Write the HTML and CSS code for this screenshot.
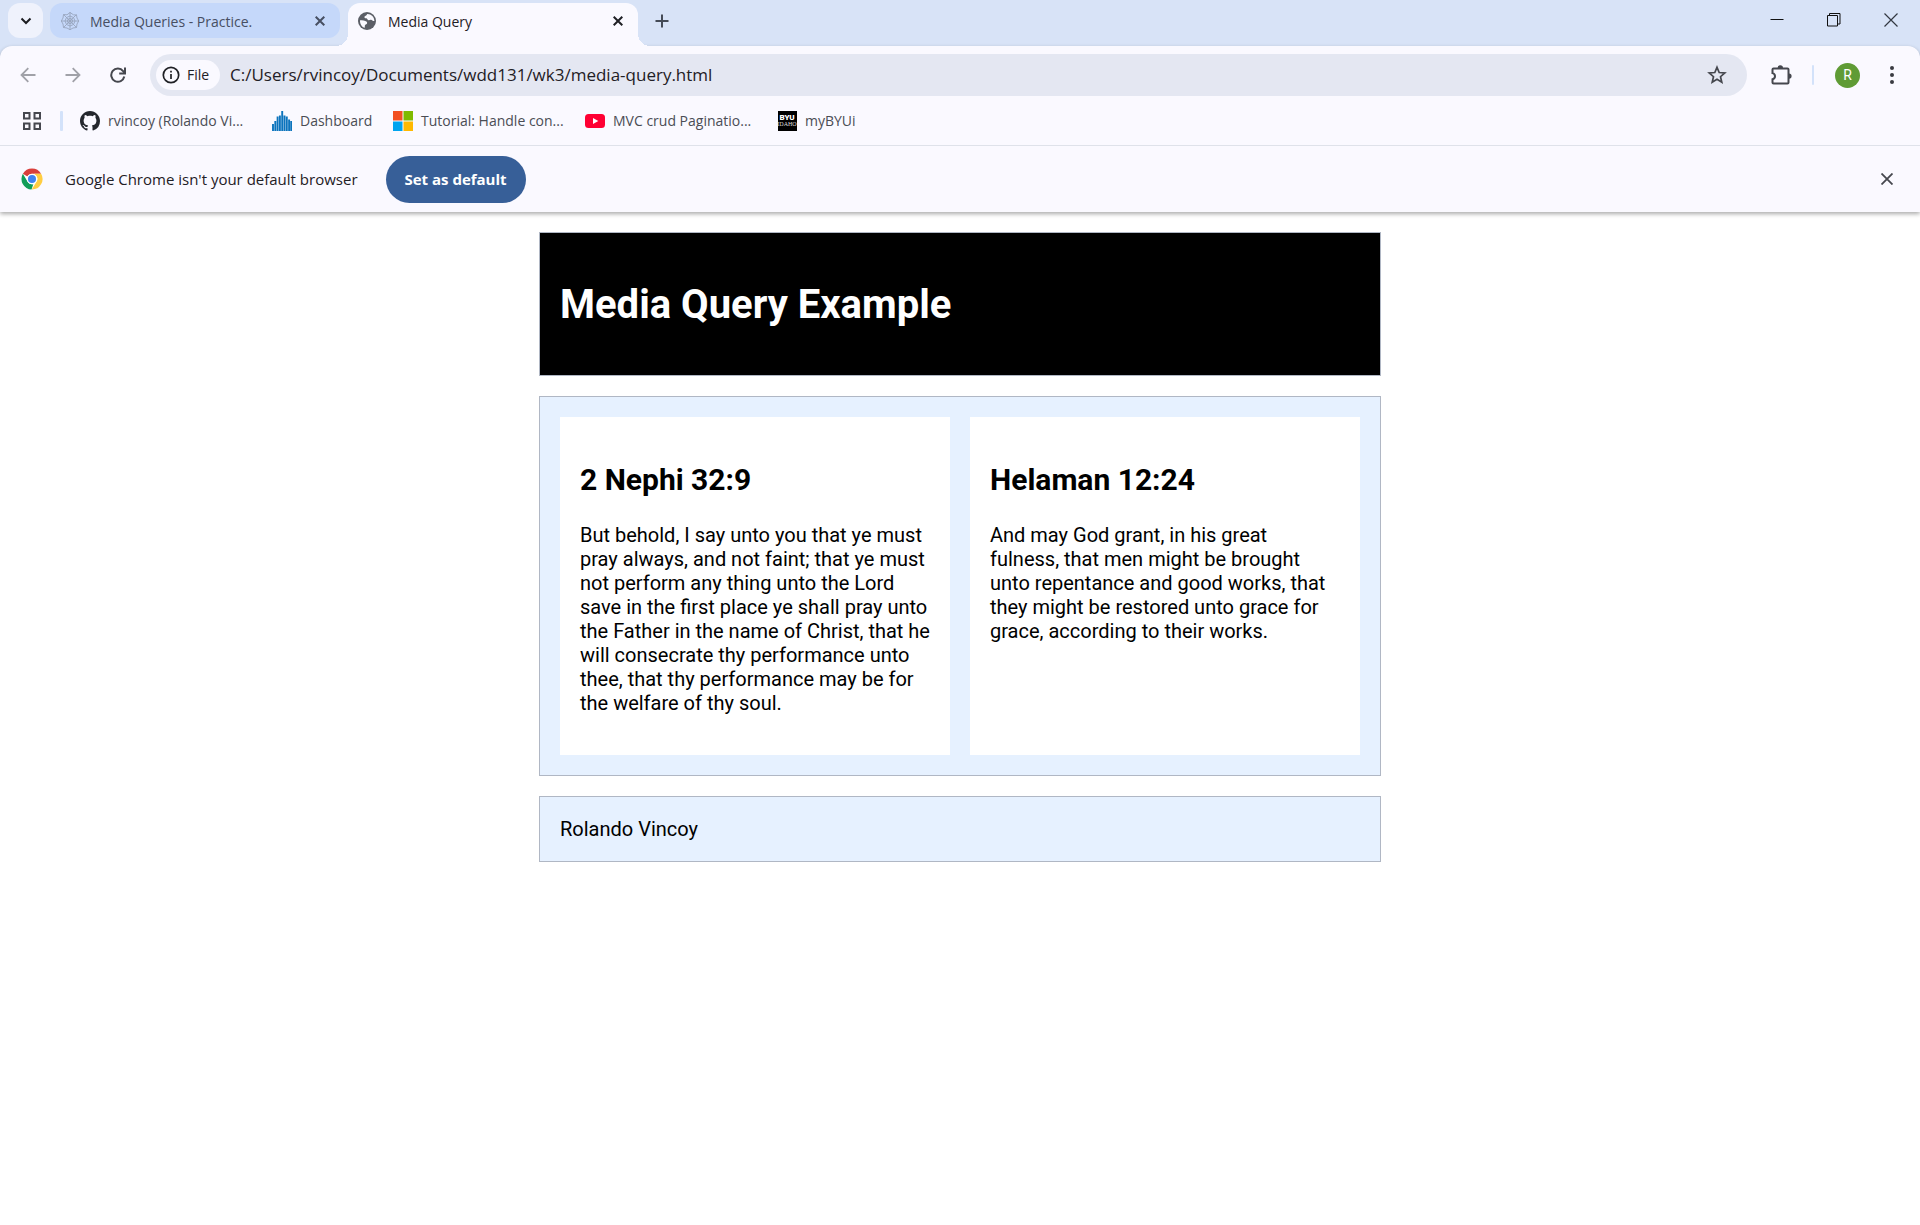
FILE: index.html
```html
<!DOCTYPE html>
<html lang="en">
<head>
<meta charset="utf-8">
<title>Media Query</title>
<link rel="stylesheet" href="styles.css">
</head>
<body>
<div class="browser">
  <div class="tab-strip">
    <button class="tab-search" aria-label="Search tabs"><svg width="12" height="12" viewBox="0 0 12 12" fill="none" stroke="#1c1d21" stroke-width="2"><path d="M1.500 3.500 6 8l4.500-4.500"/></svg></button>
    <div class="tab tab-idle">
      <svg class="tab-icon" width="20" height="20" viewBox="0 0 20 20" fill="none" stroke="#97a5bd"><path d="M10 1v18M1 10h18M3.500 3.500l13 13M16.500 3.500l-13 13" stroke-width=".9"/><path d="M10 1.500l3.500 2.300 3 .200.500 3L18.700 10l-1.700 3-.5 3.500-3.500.5-3 1.700-3-1.700-3.500-.5-.5-3.500L1.300 10 3 7l.5-3.500 3.500.3zM10 5l3.500 1.500L15 10l-1.500 3.500L10 15l-3.500-1.500L5 10l1.500-3.500z" stroke-width=".9"/><circle cx="10" cy="10" r="2.500"/></svg>
      <span class="tab-title">Media Queries - Practice.</span>
      <button class="tab-close" aria-label="Close tab"><svg width="10" height="10" viewBox="0 0 10 10" stroke="currentColor" stroke-width="2"><path d="M.7.7l8.600 8.600M9.300.7.7 9.300"/></svg></button>
    </div>
    <div class="tab tab-active">
      <svg class="tab-icon" width="18" height="18" viewBox="0 0 18 18"><circle cx="9" cy="9" r="9" fill="#5b5e66"/><path d="M9.500 1.900c-.8.400-.6 1.100-1.500 1.500-1 .5-1.700 1-1.500 2 .2.700 1.200.7 1.800.9 1 .3 1.100 1.500 2.200 1.900 1 .3 1.500-.7 2.500-.5 1 .2 1.500 1.300 3.400 1.300C16.400 5 13.300 1.900 9.500 1.900zM2 8.200c2 .1 5.400.1 6.700 1.500.9 1 .3 2.200-.5 2.600-.8.400-1.400.8-1.400 1.800v1.700C4 15 1.800 12.200 2 8.200z" fill="#faf9ff"/></svg>
      <span class="tab-title">Media Query</span>
      <button class="tab-close" aria-label="Close tab"><svg width="10" height="10" viewBox="0 0 10 10" stroke="currentColor" stroke-width="2"><path d="M.7.7l8.600 8.600M9.300.7.7 9.300"/></svg></button>
    </div>
    <button class="new-tab" aria-label="New tab"><svg width="14" height="14" viewBox="0 0 14 14" stroke="#454b57" stroke-width="2"><path d="M7 .5v13M.5 7h13"/></svg></button>
    <div class="window-controls">
      <button aria-label="Minimize"><svg width="14" height="14" viewBox="0 0 14 14" stroke="#111"><path d="M.5 6.500h13"/></svg></button>
      <button aria-label="Restore"><svg width="14" height="14" viewBox="0 0 14 14" fill="none" stroke="#111"><path d="M.5 2.500h10v10.500h-10zM2.500 2.500v-2h10.500v10.500h-2.500"/></svg></button>
      <button aria-label="Close"><svg width="14" height="14" viewBox="0 0 14 14" stroke="#333842" stroke-width="1.200"><path d="M.5.5l13 13M13.500.5l-13 13"/></svg></button>
    </div>
  </div>

  <div class="chrome-panel">
    <div class="toolbar">
      <nav class="nav-buttons" aria-label="History">
        <button aria-label="Back"><svg width="16" height="16" viewBox="0 0 16 16" fill="none" stroke="#a0a1a8" stroke-width="1.800"><path d="M15.500 8H1.800M8.300 1.200 1.500 8l6.800 6.800"/></svg></button>
        <button aria-label="Forward"><svg width="16" height="16" viewBox="0 0 16 16" fill="none" stroke="#a0a1a8" stroke-width="1.800"><path d="M.5 8h13.700M7.700 1.200 14.500 8l-6.800 6.800"/></svg></button>
        <button aria-label="Reload"><svg width="16" height="16" viewBox="0 0 16 16" fill="none" stroke="#45474e" stroke-width="2"><path d="M14.300 9.500a6.600 6.600 0 1 1-1.200-5.400L14.500 6"/><path d="M15 .5v6H9.200"/></svg></button>
      </nav>
      <div class="omnibox">
        <button class="file-chip"><svg width="18" height="18" viewBox="0 0 18 18" fill="none" stroke="#1f2025" stroke-width="1.700"><circle cx="9" cy="9" r="7.700"/><path d="M9 8v5M9 4.700v1.800"/></svg>File</button>
        <input class="address" type="text" aria-label="Address" value="C:/Users/rvincoy/Documents/wdd131/wk3/media-query.html">
        <button class="star" aria-label="Bookmark this tab"><svg width="20" height="20" viewBox="0 0 20 20" fill="none" stroke="#45474e" stroke-width="1.700"><path d="M10 2.300l2.200 5.200 5.600.5-4.300 3.700 1.300 5.500-4.800-2.900-4.800 2.900 1.300-5.500L2.200 8l5.600-.5z"/></svg></button>
      </div>
      <div class="actions">
        <button class="extensions" aria-label="Extensions"><svg width="22" height="22" viewBox="0 0 22 22"><path d="M3.500 4.500h14q1 0 1 1v13q0 1-1 1h-14q-1 0-1-1v-3.300c1.700-.4 2.500-1.600 2.500-3s-.8-2.700-2.500-3.100V5.500q0-1 1-1z" fill="none" stroke="#45474e" stroke-width="2"/><path d="M7.600 4a2.700 2.700 0 0 1 5.400 0zM19 9.500a2.600 2.600 0 0 1 0 5.200z" fill="#45474e"/></svg></button>
        <span class="divider"></span>
        <button class="avatar" aria-label="Profile">R</button>
        <button class="menu" aria-label="Menu"><svg width="4" height="18" viewBox="0 0 4 18" fill="#393b42"><circle cx="2" cy="2" r="2"/><circle cx="2" cy="9" r="2"/><circle cx="2" cy="16" r="2"/></svg></button>
      </div>
    </div>

    <nav class="bookmarks" aria-label="Bookmarks">
      <button class="apps" aria-label="Apps"><svg width="18" height="18" viewBox="0 0 18 18" fill="none" stroke="#45474e" stroke-width="2"><path d="M1 1h5.500v5.500H1zM11.500 1H17v5.500h-5.500zM1 11.500h5.500V17H1zM11.500 11.500H17V17h-5.500z"/></svg></button>
      <span class="divider"></span>
      <a class="bookmark" href="#"><svg width="20" height="20" viewBox="0 0 16 16" fill="#24272d"><path d="M8 0C3.580 0 0 3.580 0 8c0 3.540 2.290 6.530 5.470 7.590.4.070.55-.17.55-.38 0-.19-.01-.82-.01-1.490-2.010.37-2.530-.49-2.690-.94-.09-.23-.48-.94-.82-1.130-.28-.15-.68-.52-.01-.53.63-.01 1.080.58 1.230.82.72 1.210 1.870.87 2.330.66.070-.52.28-.87.51-1.070-1.780-.2-3.640-.89-3.640-3.950 0-.87.31-1.590.82-2.150-.08-.2-.36-1.020.08-2.120 0 0 .67-.21 2.200.82.640-.18 1.320-.27 2-.27s1.360.09 2 .27c1.530-1.040 2.200-.82 2.200-.82.440 1.100.16 1.920.08 2.120.51.560.82 1.270.82 2.150 0 3.070-1.870 3.750-3.650 3.950.29.25.54.73.54 1.480 0 1.070-.01 1.930-.01 2.200 0 .21.15.46.55.38A8.010 8.010 0 0 0 16 8c0-4.420-3.580-8-8-8z"/></svg>rvincoy (Rolando Vi...</a>
      <a class="bookmark bookmark-short" href="#"><svg width="20" height="20" viewBox="0 0 20 20" stroke="#0c74bd" stroke-width="1.900"><path d="M1 20v-7M3.300 20V10M5.600 20V5.500M7.900 20V4.500M10.200 20V0M12.500 20V4.500M14.800 20V5.500M17.100 20V8.500M19.200 20V10"/></svg>Dashboard</a>
      <a class="bookmark" href="#"><svg width="20" height="20" viewBox="0 0 20 20"><path fill="#f25022" d="M0 0h9.500v9.500H0z"/><path fill="#7fba00" d="M10.500 0H20v9.500h-9.500z"/><path fill="#00a4ef" d="M0 10.500h9.500V20H0z"/><path fill="#ffb900" d="M10.500 10.500H20V20h-9.500z"/></svg>Tutorial: Handle con...</a>
      <a class="bookmark" href="#"><svg width="20" height="20" viewBox="0 0 20 20"><rect y="3" width="20" height="14" rx="3.500" fill="#f03"/><path d="M8 7l5.300 3L8 13z" fill="#fff"/></svg>MVC crud Paginatio...</a>
      <a class="bookmark" href="#"><svg width="20" height="20" viewBox="0 0 20 20"><path d="M1 0h19v20H1z"/><text class="byu-bold" x="10" y="9" text-anchor="middle">BYU</text><text class="byu-thin" x="10" y="15" text-anchor="middle">IDAHO</text></svg>myBYUi</a>
    </nav>

    <div class="infobar">
      <svg width="22" height="22" viewBox="0 0 48 48"><circle cx="24" cy="24" r="23" fill="#fff"/><path fill="#d93f3c" d="M24 1a23 23 0 0 1 19.900 11.500H24a11.500 11.500 0 0 0-10 5.800L4.100 12.500A23 23 0 0 1 24 1z"/><path fill="#119d58" d="M4.100 12.500l10 17.200A11.500 11.500 0 0 0 24 35.500l2.800-.3L23 47A23 23 0 0 1 4.100 12.500z"/><path fill="#ffcd42" d="M43.900 12.500A23 23 0 0 1 23.500 47L34 29.700a11.500 11.500 0 0 0-3-14.900l-3-2.300z"/><circle cx="24" cy="24" r="11.500" fill="#fff"/><circle cx="24" cy="24" r="8.800" fill="#3f83f1"/></svg>
      <span class="info-text">Google Chrome isn't your default browser</span>
      <button class="set-default">Set as default</button>
      <button class="info-close" aria-label="Dismiss"><svg width="12" height="12" viewBox="0 0 12 12" stroke="#45474e" stroke-width="1.800"><path d="M.5.5l11 11M11.500.5l-11 11"/></svg></button>
    </div>
  </div>
</div>

<div class="page">
  <header class="box site-header"><h1>Media Query Example</h1></header>
  <main class="box verses">
    <section class="card">
      <h2>2 Nephi 32:9</h2>
      <p>But behold, I say unto you that ye must pray always, and not faint; that ye must not perform any thing unto the Lord save in the first place ye shall pray unto the Father in the name of Christ, that he will consecrate thy performance unto thee, that thy performance may be for the welfare of thy soul.</p>
    </section>
    <section class="card">
      <h2>Helaman 12:24</h2>
      <p>And may God grant, in his great fulness, that men might be brought unto repentance and good works, that they might be restored unto grace for grace, according to their works.</p>
    </section>
  </main>
  <footer class="box">Rolando Vincoy</footer>
</div>
</body>
</html>
```
FILE: styles.css
```css
* { box-sizing: border-box; }

body {
  margin: 0;
  background: #fff;
  color: #000;
  font: 20px/24px Roboto, sans-serif;
}

svg { display: block; flex: none; }

button {
  display: flex;
  align-items: center;
  justify-content: center;
  flex: none;
  padding: 0;
  border: 0;
  background: none;
  color: inherit;
  font: inherit;
}

/* Browser window */
.browser {
  background: #d8e3f7;
  color: #1f2025;
  font: 15px/20px "Open Sans", "Noto Sans", sans-serif;
}

.tab-strip {
  display: flex;
  align-items: flex-start;
  height: 46px;
  padding: 3px 0 0 8px;
}

.tab-search {
  width: 35px;
  height: 35px;
  border-radius: 12px;
  background: #eff2fc;
}

.tab {
  display: flex;
  align-items: center;
  width: 290px;
  height: 35px;
  padding: 0 10px;
}

.tab-idle {
  margin: 0 8px 0 7px;
  border-radius: 12px;
  background: #c5d8fa;
  color: #474f62;
  gap: 10px;
}

.tab-active {
  position: relative;
  height: 43px;
  padding-bottom: 8px;
  border-radius: 12px 12px 0 0;
  background: #faf9ff;
  gap: 12px;
}

/* Flared feet of the selected tab */
.tab-active::before,
.tab-active::after {
  content: "";
  position: absolute;
  bottom: 0;
  width: 12px;
  height: 12px;
}
.tab-active::before {
  right: 100%;
  background: radial-gradient(circle at 0 0, transparent 12px, #faf9ff 12px);
}
.tab-active::after {
  left: 100%;
  background: radial-gradient(circle at 100% 0, transparent 12px, #faf9ff 12px);
}

.tab-title { flex: 1; padding-top: 2px; font-size: 14px; }

.tab-close { width: 20px; height: 20px; }

.new-tab { width: 36px; height: 36px; margin-left: 6px; }

.window-controls { display: flex; margin: 0 1px 0 auto; }
.window-controls button { width: 57px; height: 34px; }

.chrome-panel {
  border-radius: 12px 12px 0 0;
  background: #faf9ff;
  box-shadow: 0 2px 4px #0005;
}

.toolbar {
  display: flex;
  align-items: center;
  padding: 8px 12px 0 5px;
}

.nav-buttons { display: flex; }
.nav-buttons button { width: 45px; height: 40px; }

.omnibox {
  display: flex;
  align-items: center;
  flex: 1;
  height: 42px;
  margin-left: 10px;
  padding: 0 20px 0 6px;
  border-radius: 21px;
  background: #e4e7f2;
}

.file-chip {
  justify-content: flex-start;
  gap: 7px;
  width: 64px;
  height: 30px;
  padding-left: 6px;
  border-radius: 15px;
  background: #faf9ff;
  font-size: 14px;
  font-weight: 500;
}

.address {
  flex: 1;
  min-width: 0;
  padding: 0 10px;
  border: 0;
  background: none;
  color: #1f2025;
  font: 17px/24px "Open Sans", "Noto Sans", sans-serif;
}

.actions { display: flex; align-items: center; }

.extensions { width: 30px; height: 30px; margin: 0 16px 0 19px; }

.divider {
  width: 2px;
  height: 20px;
  border-radius: 1px;
  background: #d3e2fa;
}

.avatar {
  width: 25px;
  height: 25px;
  margin: 0 16px 0 21px;
  border-radius: 50%;
  background: #5f9b35;
  color: #fff;
  font: 14px/20px Roboto, sans-serif;
}

.menu { width: 32px; height: 32px; }

.bookmarks {
  display: flex;
  align-items: center;
  height: 50px;
  padding-left: 23px;
  border-bottom: 1px solid #dfe2ea;
}

.bookmarks .divider { margin: 0 17px 0 19px; width: 3px; }

.bookmark {
  display: flex;
  align-items: center;
  gap: 8px;
  width: 192px;
  color: #4a4d55;
  font-size: 14px;
  text-decoration: none;
  white-space: nowrap;
}
.bookmark-short { width: 121px; }

.byu-bold { fill: #fff; font: 900 8px Roboto, sans-serif; }
.byu-thin { fill: #ddd; font: 6px "Liberation Serif", serif; }

.infobar {
  display: flex;
  align-items: center;
  height: 66px;
  padding: 0 21px;
}

.info-text { margin: 0 28px 0 22px; }

.set-default {
  width: 140px;
  height: 47px;
  border-radius: 24px;
  background: #375f98;
  color: #fff;
  font-size: 15px;
  font-weight: 700;
}

.info-close { width: 24px; height: 24px; margin-left: auto; }

/* Web page */
.page {
  display: grid;
  gap: 20px;
  max-width: 842px;
  margin: 20px auto;
}

.box {
  padding: 20px;
  border: 1px solid #b0b7c4;
  background: #e6f1ff;
}

.site-header { background: #000; color: #fff; }

h1 { margin: 28px 0 26px; font-size: 40px; line-height: 48px; }
h2 { margin: 25px 0; font-size: 30px; line-height: 36px; }
p { margin: 20px 0; }

.verses {
  display: grid;
  grid-template-columns: 1fr 1fr;
  gap: 20px;
}

.card { padding: 20px; background: #fff; }
```
